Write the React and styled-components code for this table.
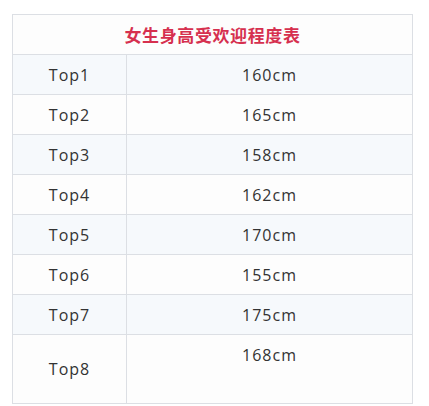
import React from 'react';
import styled, { createGlobalStyle } from 'styled-components';

const GlobalStyle = createGlobalStyle`
  body {
    margin: 0;
    background: #ffffff;
    font-family: "Open Sans", "Noto Sans CJK SC", sans-serif;
  }
`;

const Page = styled.div`
  padding: 14px 16px 0 12px;
`;

const Table = styled.table`
  width: 401px;
  border-collapse: collapse;
  table-layout: fixed;
  color: #333;
`;

const TitleCell = styled.th`
  height: 40px;
  padding: 0;
  border: 1px solid #dcdfe4;
  background: #fdfdfd;
  color: #d6304f;
  font-family: "Noto Sans CJK SC", sans-serif;
  font-size: 17px;
  font-weight: 700;
  letter-spacing: 0.6px;
  text-align: center;
  box-sizing: border-box;
`;

const Row = styled.tr`
  background: ${props => (props.$alt ? '#f6f9fc' : '#fdfdfd')};
`;

const Td = styled.td`
  height: ${props => props.$tall ? '69px' : '40px'};
  padding: ${props => props.$top ? '9px 0 0' : '0'};
  border: 1px solid #dcdfe4;
  font-size: 16px;
  letter-spacing: 1px;
  text-align: center;
  vertical-align: ${props => props.$top ? 'top' : 'middle'};
  box-sizing: border-box;
`;

const rows = [
  ['Top1', '160cm'],
  ['Top2', '165cm'],
  ['Top3', '158cm'],
  ['Top4', '162cm'],
  ['Top5', '170cm'],
  ['Top6', '155cm'],
  ['Top7', '175cm'],
];

const App = () => (
  <Page>
    <GlobalStyle />
    <Table>
      <colgroup>
        <col style={{ width: '114px' }} />
        <col />
      </colgroup>
      <thead>
        <tr>
          <TitleCell colSpan={2}>女生身高受欢迎程度表</TitleCell>
        </tr>
      </thead>
      <tbody>
        {rows.map(([rank, height], i) => (
          <Row key={rank} $alt={i % 2 === 0}>
            <Td>{rank}</Td>
            <Td>{height}</Td>
          </Row>
        ))}
        <Row>
          <Td $tall>Top8</Td>
          <Td $tall $top>168cm</Td>
        </Row>
      </tbody>
    </Table>
  </Page>
);

export default App;
